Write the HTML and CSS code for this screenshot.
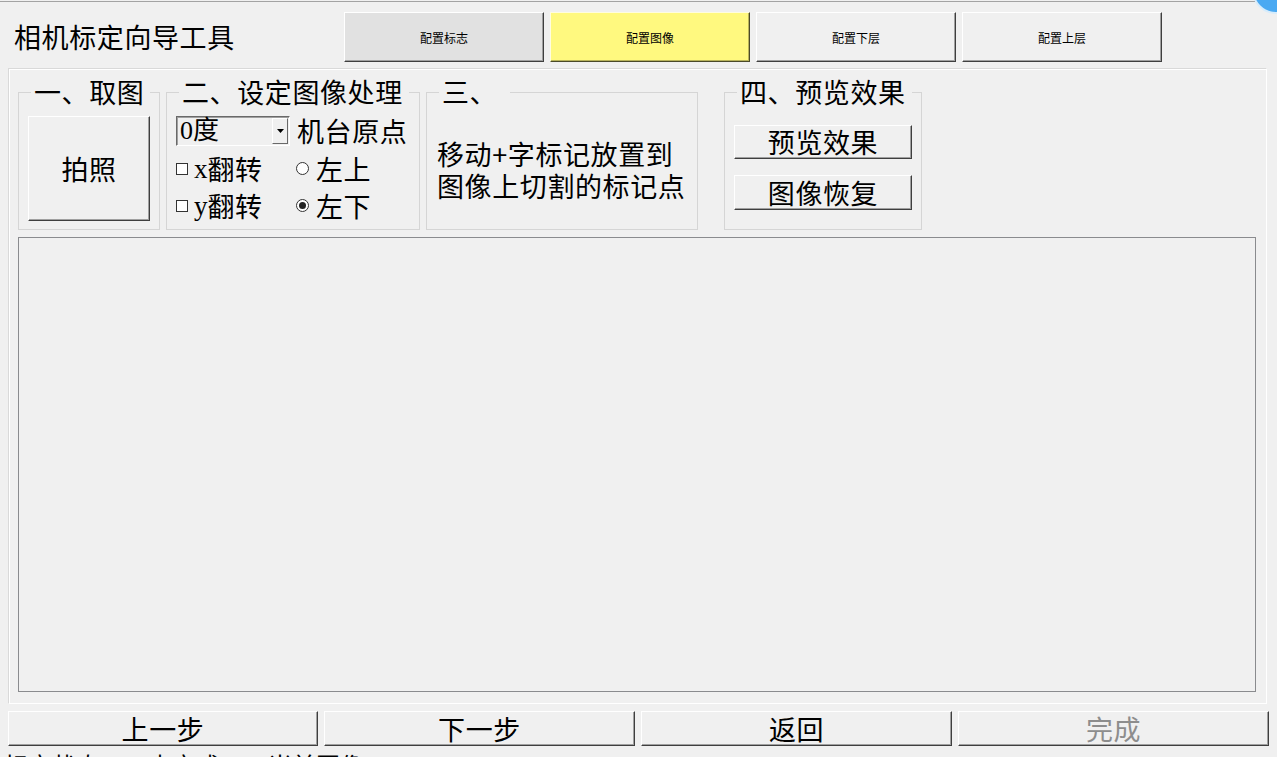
FILE: index.html
```html
<!DOCTYPE html>
<html lang="zh-CN">
<head>
  <meta charset="UTF-8" />
  <title>相机标定向导工具</title>
  <link rel="stylesheet" href="styles.css">
</head>
<body>
  <div class="corner-orb"></div>

  <div class="header">
    <div class="app-title">相机标定向导工具</div>
    <div class="tabs">
      <button class="tab tab-done">配置标志</button>
      <button class="tab tab-active">配置图像</button>
      <button class="tab">配置下层</button>
      <button class="tab">配置上层</button>
    </div>
  </div>

  <div class="main-panel">
    <div class="groups">
      <div class="group group-grab">
        <span class="legend">一、取图</span>
        <button class="btn btn-shot">拍照</button>
      </div>

      <div class="group group-process">
        <span class="legend">二、设定图像处理</span>
        <div class="row combo-row">
          <div class="combo">
            <span class="combo-value">0度</span>
            <span class="combo-arrow">
              <svg width="7" height="4" viewBox="0 0 7 4"><path d="M0 0h7L3.5 4z" fill="#000"/></svg>
            </span>
          </div>
          <span class="combo-label">机台原点</span>
        </div>
        <div class="row option-row">
          <label class="option"><span class="check"></span><span class="latin">x</span>翻转</label>
          <label class="option"><span class="radio"></span>左上</label>
        </div>
        <div class="row option-row">
          <label class="option"><span class="check"></span><span class="latin">y</span>翻转</label>
          <label class="option"><span class="radio checked"></span>左下</label>
        </div>
      </div>

      <div class="group group-mark">
        <span class="legend">三、&nbsp;</span>
        <p class="hint">移动+字标记放置到</p>
        <p class="hint">图像上切割的标记点</p>
      </div>

      <div class="group group-preview">
        <span class="legend">四、预览效果</span>
        <button class="btn btn-side">预览效果</button>
        <button class="btn btn-side">图像恢复</button>
      </div>
    </div>

    <div class="image-view"></div>
  </div>

  <div class="footer">
    <button class="btn btn-step">上一步</button>
    <button class="btn btn-step">下一步</button>
    <button class="btn btn-step">返回</button>
    <button class="btn btn-step" disabled>完成</button>
  </div>

  <div class="status-line">标定状态　　未完成　　当前图像</div>
</body>
</html>
```

FILE: styles.css
```css
body {
  margin: 0;
  width: 1277px;
  height: 757px;
  overflow: hidden;
  position: relative;
  background-color: #f0f0f0;
  color: #000;
  font-family: "Liberation Serif", "Noto Sans CJK SC", serif;
  font-size: 27px;
}

.corner-orb {
  position: absolute;
  top: -34px;
  left: 1252px;
  width: 44px;
  height: 44px;
  border-radius: 50%;
  background-color: #4aa9f2;
  border: 2px solid #d7ecfb;
}

.header {
  display: flex;
  align-items: flex-start;
  margin-top: 1px;
  margin-right: 22px;
  padding-top: 10px;
  border-top: 1px solid #a3a3a3;
}

.app-title {
  width: 330px;
  padding-left: 14px;
  line-height: 50px;
  letter-spacing: 0.6px;
  font-family: "Noto Sans CJK SC", sans-serif;
}

.tabs {
  display: flex;
  gap: 6px;
}

.tab {
  width: 200px;
  height: 50px;
  padding: 0;
  font-family: "Noto Sans CJK SC", sans-serif;
  font-size: 12px;
  color: #000;
  background-color: #f0f0f0;
  border: 1px solid;
  border-color: #fff #3f3f3f #3f3f3f #fff;
  box-shadow: inset -1px -1px 0 #a0a0a0;
}

.tab-done {
  background-color: #e1e1e1;
}

.tab-active {
  background-color: #fff97f;
  border-color: #fffde0 #4a4a2a #4a4a2a #fffde0;
  box-shadow: inset -1px -1px 0 #b8b35a;
}

/* main frame */
.main-panel {
  box-sizing: border-box;
  height: 636px;
  margin: 6px 10px 0 8px;
  padding: 23px 0 0 9px;
  border: 1px solid;
  border-color: #d9d9d9 #fff #fff #d9d9d9;
  box-shadow: inset 1px 1px 0 #fff;
}

.groups {
  display: flex;
  gap: 6px;
}

.group {
  position: relative;
  box-sizing: border-box;
  height: 138px;
  padding: 23px 0 0 9px;
  border: 1px solid #d5d5d5;
  line-height: 30px;
}

.legend {
  position: absolute;
  top: -15px;
  left: 12px;
  padding: 0 6px 0 3px;
  line-height: 28px;
  white-space: nowrap;
  letter-spacing: 0.6px;
  background-color: #f0f0f0;
  font-family: "Noto Sans CJK SC", sans-serif;
}

.group-grab { width: 142px; }
.group-process { width: 254px; }
.group-mark { width: 272px; }
.group-preview { width: 198px; margin-left: 20px; padding-top: 32px; }

.btn {
  display: block;
  padding: 0;
  font-family: "Noto Sans CJK SC", sans-serif;
  font-size: 27px;
  letter-spacing: 0.6px;
  color: #000;
  background-color: #f0f0f0;
  border: 1px solid;
  border-color: #fff #3f3f3f #3f3f3f #fff;
  box-shadow: inset -1px -1px 0 #a0a0a0;
}

.btn:disabled {
  color: #8d8d8d;
}

.btn-shot {
  width: 122px;
  height: 105px;
}

.btn-side {
  width: 178px;
  height: 34px;
  line-height: 30px;
}

.btn-side + .btn-side {
  margin-top: 16px;
  height: 35px;
}

.row {
  display: flex;
  align-items: center;
}

.combo-row {
  height: 30px;
  margin-bottom: 4px;
}

.combo {
  box-sizing: border-box;
  display: flex;
  align-items: center;
  justify-content: space-between;
  width: 114px;
  height: 30px;
  padding: 0 1px 0 3px;
  border: 1px solid;
  border-color: #696969 #fff #fff #696969;
  box-shadow: inset 1px 1px 0 #a0a0a0;
}

.combo-value {
  font-size: 26px;
  line-height: 28px;
}

.combo-arrow {
  box-sizing: border-box;
  display: flex;
  align-items: center;
  justify-content: center;
  width: 16px;
  height: 26px;
  border: 1px solid;
  border-color: #fff #696969 #696969 #fff;
}

.combo-label {
  margin-left: 7px;
  font-family: "Noto Sans CJK SC", sans-serif;
  letter-spacing: 0.6px;
}

.option-row {
  height: 37px;
}

.option {
  display: flex;
  align-items: center;
  width: 120px;
  font-family: "Noto Sans CJK SC", sans-serif;
  letter-spacing: 0.6px;
}

.latin {
  font-family: "Liberation Serif", serif;
  letter-spacing: 0;
}

.check {
  box-sizing: border-box;
  width: 12px;
  height: 12px;
  margin-right: 6px;
  border: 1px solid #333;
  background-color: #fff;
}

.radio {
  box-sizing: border-box;
  position: relative;
  width: 13px;
  height: 13px;
  margin-right: 7px;
  border: 1px solid #333;
  border-radius: 50%;
  background-color: #fff;
}

.radio.checked::after {
  content: "";
  position: absolute;
  top: 2px;
  left: 2px;
  width: 7px;
  height: 7px;
  border-radius: 50%;
  background-color: #222;
}

.hint {
  margin: 0 0 0 1px;
  line-height: 32px;
  letter-spacing: 0.6px;
  font-family: "Noto Sans CJK SC", sans-serif;
}

.hint:first-of-type {
  margin-top: 22px;
}

.image-view {
  box-sizing: border-box;
  width: 1238px;
  height: 455px;
  margin-top: 7px;
  border: 1px solid #8a8b8e;
}

.footer {
  display: flex;
  gap: 6px;
  margin-top: 7px;
  padding-left: 8px;
}

.btn-step {
  width: 311px;
  height: 35px;
  line-height: 31px;
}

.btn-step:first-child {
  width: 310px;
}

.status-line {
  margin-top: 6px;
  padding-left: 4px;
  line-height: 26px;
  white-space: nowrap;
  font-family: "Noto Sans CJK SC", sans-serif;
  font-size: 24px;
}
```
